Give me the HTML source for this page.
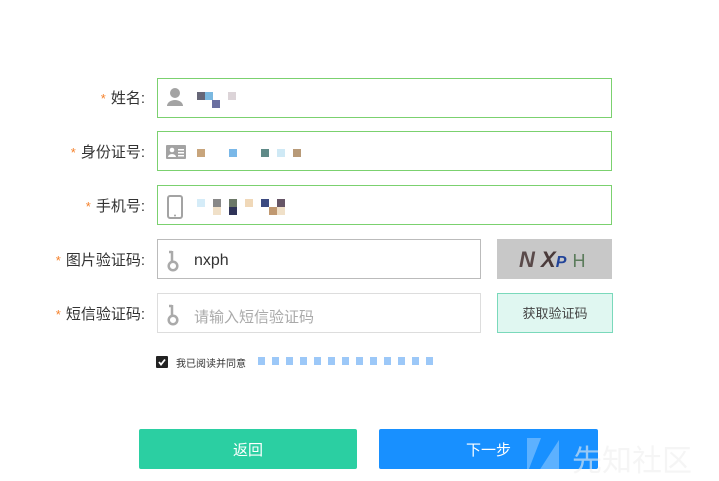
<!DOCTYPE html>
<html><head><meta charset="utf-8"><style>
body{margin:0;width:719px;height:481px;background:#fff;font-family:"Liberation Sans","Noto Sans CJK SC",sans-serif;position:relative;overflow:hidden}
.a{position:absolute}
.lab{position:absolute;right:574px;font-size:15px;color:#333;line-height:20px;white-space:nowrap}
.lab b{color:#f5812a;font-weight:normal;margin-right:5px;font-size:13px}
.in{position:absolute;left:157px;height:38px;border:1px solid #7bd16f;box-sizing:content-box}
.px{position:absolute;width:8px;height:8px}
</style></head><body>
<div class="lab" style="top:89px"><b>*</b>姓名:</div>
<div class="in" style="top:78px;width:453px"></div>
<svg class="a" style="left:166px;top:87px" width="18" height="20"><circle cx="9" cy="6" r="5" fill="#a3a3a3"/><path d="M1 19a8 6 0 0 1 16 0z" fill="#a3a3a3"/></svg>
<div class="px" style="left:197px;top:92px;background:#667"></div><div class="px" style="left:205px;top:92px;background:#7ab8e0"></div><div class="px" style="left:212px;top:100px;background:#6a6fa0"></div><div class="px" style="left:228px;top:92px;background:#dcd4d8"></div>

<div class="lab" style="top:143px"><b>*</b>身份证号:</div>
<div class="in" style="top:131px;width:453px"></div>
<svg class="a" style="left:166px;top:145px" width="20" height="14"><rect width="20" height="14" rx="1" fill="#a3a3a3"/><circle cx="6" cy="5" r="2.3" fill="#fff"/><path d="M2 12a4 3 0 0 1 8 0z" fill="#fff"/><rect x="12" y="4" width="6" height="1.5" fill="#fff"/><rect x="12" y="7" width="6" height="1.5" fill="#fff"/><rect x="12" y="10" width="6" height="1.5" fill="#fff"/></svg>
<div class="px" style="left:197px;top:149px;background:#c8a57c"></div><div class="px" style="left:229px;top:149px;background:#7ab8e8"></div><div class="px" style="left:261px;top:149px;background:#5f8a88"></div><div class="px" style="left:277px;top:149px;background:#cfe9f5"></div><div class="px" style="left:293px;top:149px;background:#b89a78"></div>

<div class="lab" style="top:197px"><b>*</b>手机号:</div>
<div class="in" style="top:185px;width:453px"></div>
<svg class="a" style="left:167px;top:195px" width="16" height="24"><rect x="1" y="1" width="14" height="22" rx="2" fill="none" stroke="#a3a3a3" stroke-width="2"/><circle cx="8" cy="20.5" r="1" fill="#a3a3a3"/></svg>
<div class="px" style="left:197px;top:199px;background:#d5ecf8"></div><div class="px" style="left:213px;top:207px;background:#f0e0c8"></div><div class="px" style="left:213px;top:199px;background:#888"></div><div class="px" style="left:229px;top:199px;background:#6c7868"></div><div class="px" style="left:229px;top:207px;background:#2f3358"></div><div class="px" style="left:245px;top:199px;background:#f0d8b8"></div><div class="px" style="left:261px;top:199px;background:#3c4a80"></div><div class="px" style="left:277px;top:199px;background:#656"></div><div class="px" style="left:269px;top:207px;background:#c09870"></div><div class="px" style="left:277px;top:207px;background:#f0e0c8"></div>

<div class="lab" style="top:251px"><b>*</b>图片验证码:</div>
<div class="in" style="top:239px;width:322px;border-color:#bbb"></div>
<svg class="a" style="left:165px;top:249px" width="16" height="24"><path d="M7 2v10" stroke="#aaa" stroke-width="2.5"/><path d="M4 3h3" stroke="#aaa" stroke-width="2.5"/><circle cx="8" cy="17" r="4.3" fill="none" stroke="#aaa" stroke-width="2.5"/></svg>
<div class="a" style="left:194px;top:252px;font-size:16px;color:#333">nxph</div>
<div class="a" style="left:497px;top:239px;width:115px;height:40px;background:#c8c8c8;font:italic bold 22px 'Liberation Sans',sans-serif;line-height:42px;color:#5a4a4a;padding-left:22px;box-sizing:border-box">N <span style="color:#4a3a3a">X</span><span style="color:#224499;font-size:16px">P</span> <span style="color:#5c7c5c;font-style:normal;font-weight:normal;font-size:18px">H</span></div>

<div class="lab" style="top:305px"><b>*</b>短信验证码:</div>
<div class="in" style="top:293px;width:322px;border-color:#ddd"></div>
<svg class="a" style="left:165px;top:303px" width="16" height="24"><path d="M7 2v10" stroke="#aaa" stroke-width="2.5"/><path d="M4 3h3" stroke="#aaa" stroke-width="2.5"/><circle cx="8" cy="17" r="4.3" fill="none" stroke="#aaa" stroke-width="2.5"/></svg>
<div class="a" style="left:194px;top:306px;font-size:15px;color:#aaa">请输入短信验证码</div>
<div class="a" style="left:497px;top:293px;width:114px;height:38px;background:#e0f7f1;border:1px solid #7ad9bb;text-align:center;line-height:40px;font-size:13px;color:#444">获取验证码</div>

<div class="a" style="left:156px;top:356px;width:12px;height:12px;background:#222;border-radius:1px"></div>
<svg class="a" style="left:157px;top:357px" width="10" height="10"><path d="M2 5l2 2.5 4-5" stroke="#fff" stroke-width="1.8" fill="none"/></svg>
<div class="a" style="left:176px;top:355px;font-size:10px;color:#333">我已阅读并同意</div>
<div class="a" style="left:258px;top:357px;width:175px;height:8px;background:repeating-linear-gradient(90deg,#9cc8f8 0 7px,#fff 7px 14px)"></div>

<div class="a" style="left:139px;top:429px;width:218px;height:40px;background:#2bcfa2;border-radius:2px;color:#fff;text-align:center;line-height:44px;font-size:15px">返回</div>
<div class="a" style="left:379px;top:429px;width:219px;height:40px;background:#1890ff;border-radius:2px;color:#fff;text-align:center;line-height:44px;font-size:15px">下一步</div>
<svg class="a" style="left:525px;top:436px" width="40" height="40"><path d="M2 2h14l-14 36z" fill="#fff" opacity=".3"/><path d="M34 4v34h-22z" fill="#fff" opacity=".3"/></svg>
<div class="a" style="left:572px;top:436px;font-size:30px;color:#f0f0f0;opacity:.6">先知社区</div>
</body></html>
